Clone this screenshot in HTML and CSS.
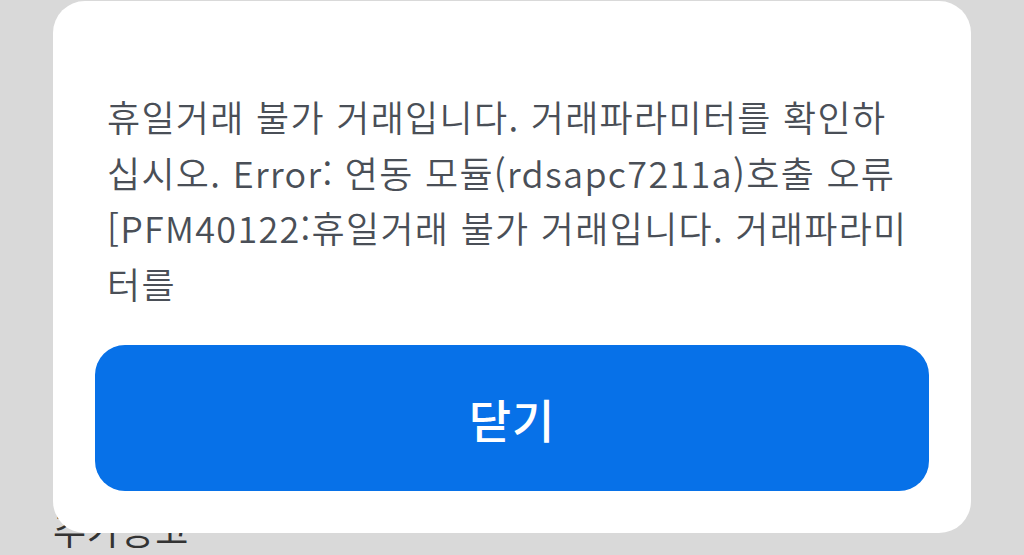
FILE: index.html
```html
<!DOCTYPE html>
<html lang="ko">
<head>
<meta charset="utf-8">
<link rel="stylesheet" href="styles.css">
</head>
<body>
<div class="page">
  <div class="behind">주가공고</div>
</div>
<div class="overlay">
  <div class="modal">
    <p class="message">
      <span class="line">휴일거래 불가 거래입니다. 거래파라미터를 확인하</span>
      <span class="line">십시오. Error: 연동 모듈(rdsapc7211a)호출 오류</span>
      <span class="line">[PFM40122:휴일거래 불가 거래입니다. 거래파라미</span>
      <span class="line">터를</span>
    </p>
    <button class="close-btn" type="button">닫기</button>
  </div>
</div>
</body>
</html>
```

FILE: styles.css
```css
html, body {
  margin: 0;
  padding: 0;
  width: 1024px;
  height: 555px;
  overflow: hidden;
  background: #d9d9d9;
  font-family: "Noto Sans CJK KR", "Noto Sans", sans-serif;
}

.page {
  height: 555px;
  padding: 0 0 0 53px;
  box-sizing: border-box;
  display: flex;
  flex-direction: column;
  justify-content: flex-end;
}

.behind {
  font-size: 36px;
  color: #333;
  line-height: 40px;
  margin-bottom: 6px;
  letter-spacing: 1px;
}

.overlay {
  position: absolute;
  left: 0;
  top: 0;
  width: 1024px;
  height: 555px;
}

.modal {
  position: absolute;
  left: 53px;
  top: 1px;
  width: 918px;
  height: 532px;
  box-sizing: border-box;
  background: #ffffff;
  border-radius: 32px;
  padding: 88px 42px 42px;
  display: flex;
  flex-direction: column;
}

.message {
  margin: 0;
  padding: 0 0 0 12px;
  font-size: 36px;
  line-height: 55.5px;
  font-weight: 350;
  letter-spacing: 1.3px;
  color: #4a4f57;
  white-space: nowrap;
}

.line {
  display: block;
}

.close-btn {
  margin-top: auto;
  height: 146px;
  width: 100%;
  border: none;
  border-radius: 30px;
  background: #0771e8;
  color: #ffffff;
  font-family: "Noto Sans CJK KR", "Noto Sans", sans-serif;
  font-size: 46px;
  font-weight: 500;
  letter-spacing: 1px;
  padding: 0;
}
```
